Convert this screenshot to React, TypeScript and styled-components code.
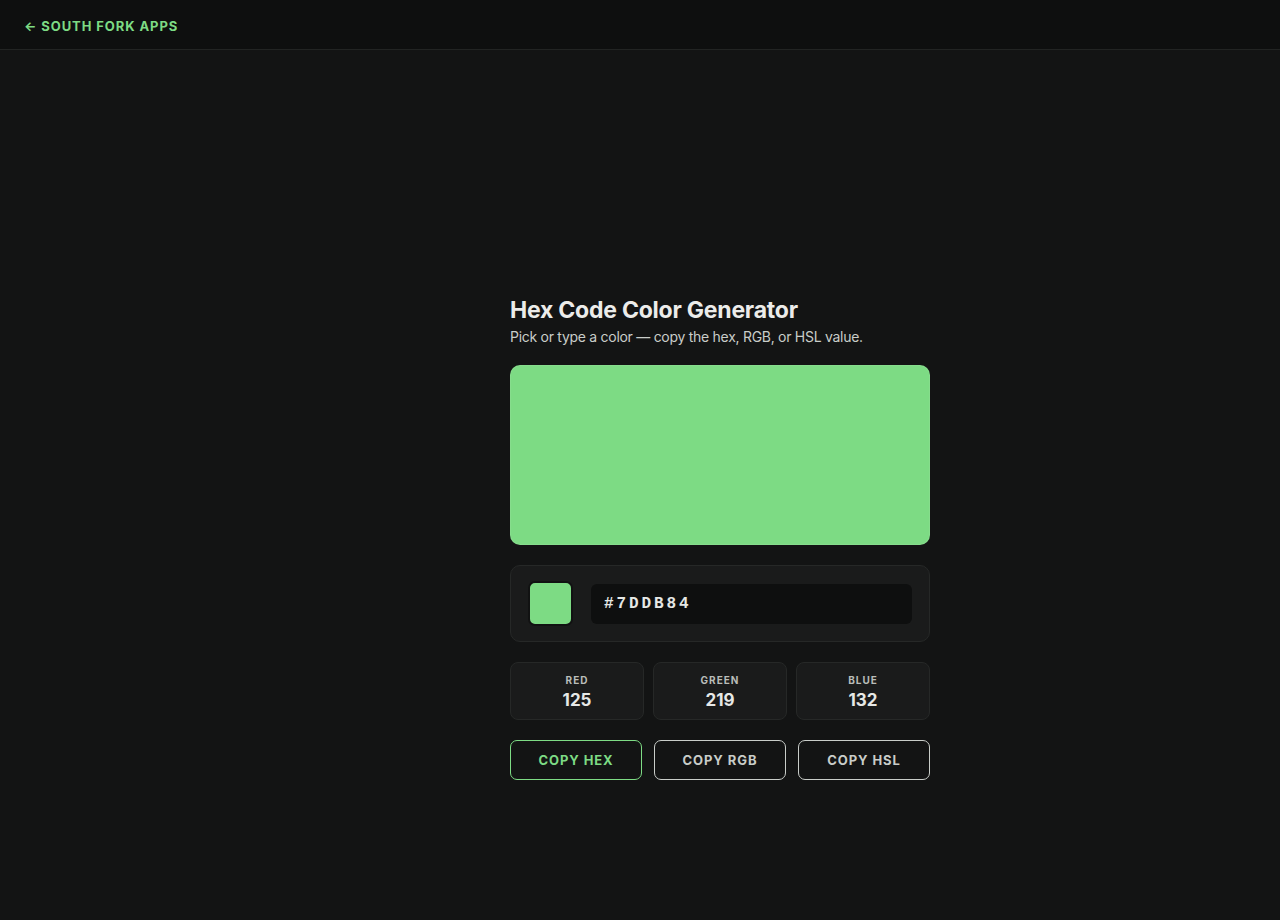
import React from "react";
import styled, { createGlobalStyle } from "styled-components";

const Global = createGlobalStyle`
  html, body { margin: 0; padding: 0; background: #131414; }
  body { font-family: "Inter", "Lato", sans-serif; color: #e6e8e6; }
  * { box-sizing: border-box; }
`;

const Header = styled.header`
  height: 50px;
  background: #0e0f0f;
  border-bottom: 1px solid #222423;
  display: flex;
  align-items: center;
  padding: 3px 24px 0;
`;

const BackLink = styled.a`
  color: #7ddb84;
  font-size: 13px;
  font-weight: 700;
  letter-spacing: 0.07em;
  text-decoration: none;
  display: flex;
  align-items: center;
  gap: 4px;
`;

const Main = styled.main`
  display: flex;
  justify-content: center;
  padding: 246px 0 0 160px;
  min-height: 870px;
`;

const Column = styled.div`
  width: 420px;
  display: flex;
  flex-direction: column;
`;

const Title = styled.h1`
  margin: 0;
  font-size: 23px;
  font-weight: 700;
  letter-spacing: -0.01em;
  color: #ececea;
  line-height: 28px;
`;

const Subtitle = styled.p`
  margin: 3px 0 0;
  font-size: 14px;
  color: #c9cdc9;
  letter-spacing: -0.02em;
  line-height: 19px;
`;

const Preview = styled.div<{ $color: string }>`
  margin-top: 19px;
  height: 180px;
  border-radius: 10px;
  background: ${(p) => p.$color};
  border: 1px solid rgba(255, 255, 255, 0.08);
`;

const Card = styled.div`
  background: #1a1b1b;
  border: 1px solid #262827;
  border-radius: 10px;
`;

const PickerCard = styled(Card)`
  margin-top: 20px;
  height: 77px;
  display: flex;
  align-items: center;
  padding: 0 17px;
  gap: 18px;
`;

const Swatch = styled.div<{ $color: string }>`
  width: 45px;
  height: 45px;
  border-radius: 7px;
  background: ${(p) => p.$color};
  border: 2px solid #111212;
  flex-shrink: 0;
`;

const HexInput = styled.div`
  flex: 1;
  height: 40px;
  background: #0e0f0f;
  border-radius: 6px;
  display: flex;
  align-items: center;
  padding: 0 13px;
  font-family: "Liberation Mono", "DejaVu Sans Mono", monospace;
  font-weight: 700;
  font-size: 16px;
  letter-spacing: 0.18em;
  color: #e6e8e6;
`;

const StatsRow = styled.div`
  margin-top: 20px;
  display: grid;
  grid-template-columns: repeat(3, 1fr);
  gap: 9px;
`;

const Stat = styled(Card)`
  height: 58px;
  border-radius: 8px;
  display: flex;
  flex-direction: column;
  align-items: center;
  justify-content: center;
  gap: 4px;
  padding-top: 1px;
`;

const StatLabel = styled.div`
  font-size: 10px;
  font-weight: 700;
  letter-spacing: 0.1em;
  color: #b9bdb9;
  line-height: 12px;
`;

const StatValue = styled.div`
  font-size: 17px;
  font-weight: 700;
  color: #e6e8e6;
  line-height: 20px;
`;

const ButtonRow = styled.div`
  margin-top: 20px;
  display: grid;
  grid-template-columns: repeat(3, 1fr);
  gap: 12px;
`;

const CopyButton = styled.button<{ $active?: boolean }>`
  height: 40px;
  border-radius: 7px;
  background: transparent;
  border: 1px solid ${(p) => (p.$active ? "#7ddb84" : "#c9cdc9")};
  color: ${(p) => (p.$active ? "#7ddb84" : "#c9cdc9")};
  font-family: "Inter", "Lato", sans-serif;
  font-size: 13px;
  font-weight: 700;
  letter-spacing: 0.07em;
  cursor: pointer;
`;

export default function App() {
  const color = "#7DDB84";
  return (
    <>
      <Global />
      <Header>
        <BackLink href="#">
          <span>←</span>
          <span>SOUTH FORK APPS</span>
        </BackLink>
      </Header>
      <Main>
        <Column>
          <Title>Hex Code Color Generator</Title>
          <Subtitle>Pick or type a color — copy the hex, RGB, or HSL value.</Subtitle>
          <Preview $color={color} />
          <PickerCard>
            <Swatch $color={color} />
            <HexInput>#7DDB84</HexInput>
          </PickerCard>
          <StatsRow>
            <Stat>
              <StatLabel>RED</StatLabel>
              <StatValue>125</StatValue>
            </Stat>
            <Stat>
              <StatLabel>GREEN</StatLabel>
              <StatValue>219</StatValue>
            </Stat>
            <Stat>
              <StatLabel>BLUE</StatLabel>
              <StatValue>132</StatValue>
            </Stat>
          </StatsRow>
          <ButtonRow>
            <CopyButton $active>COPY HEX</CopyButton>
            <CopyButton>COPY RGB</CopyButton>
            <CopyButton>COPY HSL</CopyButton>
          </ButtonRow>
        </Column>
      </Main>
    </>
  );
}
